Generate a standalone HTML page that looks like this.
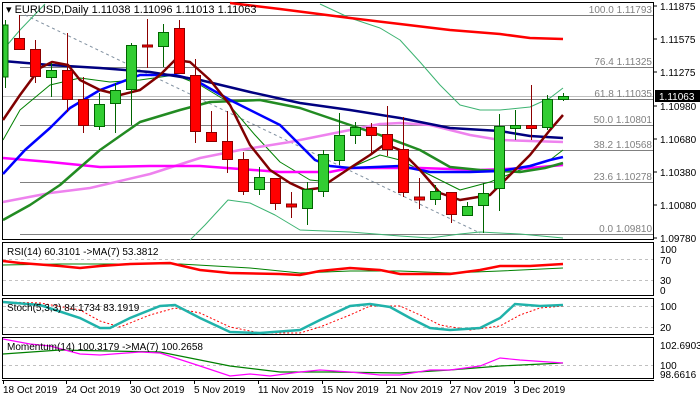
<!DOCTYPE html>
<html><head><meta charset="utf-8"><style>
html,body{margin:0;padding:0;background:#fff;}
svg{display:block;font-family:"Liberation Sans",sans-serif;}
</style></head><body>
<svg width="700" height="400" viewBox="0 0 700 400" xmlns="http://www.w3.org/2000/svg">
<rect width="700" height="400" fill="#fff"/>
<!-- panel borders -->
<g fill="none" stroke="#000" stroke-width="1">
<rect x="2.5" y="2.5" width="651" height="237"/>
<rect x="2.5" y="242.5" width="651" height="53"/>
<rect x="2.5" y="298.5" width="651" height="36"/>
<rect x="2.5" y="337.5" width="651" height="41"/>
</g>
<line x1="2" y1="380.5" x2="654" y2="380.5" stroke="#000"/>
<!-- fib lines -->
<g stroke="#808080" stroke-width="1">
<line x1="20" y1="15.5" x2="653" y2="15.5"/>
<line x1="20" y1="67.5" x2="653" y2="67.5"/>
<line x1="20" y1="99.5" x2="653" y2="99.5"/>
<line x1="20" y1="125.5" x2="653" y2="125.5"/>
<line x1="20" y1="150.5" x2="653" y2="150.5"/>
<line x1="20" y1="182.5" x2="653" y2="182.5"/>
<line x1="20" y1="234.5" x2="653" y2="234.5"/>
</g>
<line x1="3" y1="96.5" x2="653" y2="96.5" stroke="#c0c0c0"/>
<g font-size="10" fill="#808080" text-anchor="end">
<text x="652" y="13">100.0 1.11793</text>
<text x="652" y="65">76.4 1.11325</text>
<text x="652" y="97">61.8 1.11035</text>
<text x="652" y="123">50.0 1.10801</text>
<text x="652" y="148">38.2 1.10568</text>
<text x="652" y="180">23.6 1.10278</text>
<text x="652" y="232">0.0 1.09810</text>
</g>
<line x1="25" y1="15" x2="480" y2="233" stroke="#8090a0" stroke-dasharray="3,3"/>
<!-- MAs -->
<g fill="none" stroke-linejoin="round">
<polyline stroke="#3cb371" stroke-width="1" points="3,50 20,30 45,4"/>
<polyline stroke="#3cb371" stroke-width="1" points="320,4 350,18 380,28 400,40 420,62 440,85 460,105 480,110 500,110 530,107 550,98 563,88"/>
<polyline stroke="#3cb371" stroke-width="1" points="190,240 205,225 228,200 250,203 275,215 300,230 350,232 400,236 430,238 460,234 480,232 520,234 563,238"/>
<polyline stroke="#008000" stroke-width="1" points="3,140 20,110 50,85 80,78 110,82 140,80 175,75 200,85 225,100 255,135 280,162 310,180 330,182 350,168 380,155 400,160 430,175 460,190 490,182 520,170 550,160 563,150"/>
<polyline stroke="#ff0000" stroke-width="2.5" points="230,3 280,9 350,18 400,24 450,30 500,34 530,38 563,39"/>
<polyline stroke="#ee82ee" stroke-width="2.5" points="3,202 50,193 90,188 150,174 200,158 240,150 290,142 350,130 380,124 400,123 430,125 470,135 500,140 530,141 563,142"/>
<polyline stroke="#ff00ff" stroke-width="2.5" points="3,158 50,162 100,167 150,166 200,166 280,172 330,172 350,168 420,168 480,170 530,168 563,165"/>
<polyline stroke="#228b22" stroke-width="2.5" points="3,220 30,205 60,185 100,150 140,122 180,110 210,102 260,100 300,108 350,125 380,135 420,150 450,167 480,170 520,172 545,168 563,163"/>
<polyline stroke="#0000ff" stroke-width="2.5" points="3,174 25,150 50,128 70,108 100,90 140,75 175,75 195,80 230,100 280,125 300,145 315,160 330,166 350,168 400,166 430,172 470,172 500,171 530,166 550,160 563,157"/>
<polyline stroke="#000080" stroke-width="2.5" points="3,61 50,65 100,68 150,72 200,80 250,92 300,103 350,110 400,118 450,128 500,131 530,136 563,138"/>
<polyline stroke="#800000" stroke-width="2.5" points="3,120 20,95 40,68 52,62 68,65 80,80 100,90 120,95 140,90 160,75 175,60 190,62 210,80 230,105 250,145 270,170 290,183 305,190 320,188 335,178 350,168 370,155 385,144 400,150 420,170 440,193 460,200 490,195 510,175 530,155 550,130 563,115"/>
</g>
<!-- candles -->
<g stroke-width="1">
<g stroke="#006400" fill="#32cd32">
<line x1="5.5" y1="20" x2="5.5" y2="88"/><rect x="3" y="25" width="5" height="52"/>
<line x1="51.5" y1="63" x2="51.5" y2="97"/><rect x="46.5" y="70.5" width="10" height="7"/>
<line x1="99.5" y1="93" x2="99.5" y2="130"/><rect x="94.5" y="104.5" width="10" height="22"/>
<line x1="115.5" y1="83" x2="115.5" y2="133"/><rect x="110.5" y="90.5" width="10" height="13"/>
<line x1="131.5" y1="43" x2="131.5" y2="125"/><rect x="126.5" y="45.5" width="10" height="44"/>
<line x1="163.5" y1="24" x2="163.5" y2="67"/><rect x="158.5" y="32.5" width="10" height="14"/>
<line x1="259.5" y1="167" x2="259.5" y2="195"/><rect x="254.5" y="177.5" width="10" height="12"/>
<line x1="307.5" y1="182" x2="307.5" y2="225"/><rect x="302.5" y="189.5" width="10" height="19"/>
<line x1="323.5" y1="150" x2="323.5" y2="197"/><rect x="318.5" y="154.5" width="10" height="37"/>
<line x1="339.5" y1="113" x2="339.5" y2="165"/><rect x="334.5" y="135.5" width="10" height="25"/>
<line x1="355.5" y1="122" x2="355.5" y2="144"/><rect x="350.5" y="127.5" width="10" height="8"/>
<line x1="435.5" y1="185" x2="435.5" y2="205"/><rect x="430.5" y="191.5" width="10" height="8"/>
<line x1="467.5" y1="202" x2="467.5" y2="216"/><rect x="462.5" y="206.5" width="10" height="9"/>
<line x1="483.5" y1="183" x2="483.5" y2="233"/><rect x="478.5" y="193.5" width="10" height="12"/>
<line x1="499.5" y1="114" x2="499.5" y2="211"/><rect x="494.5" y="126.5" width="10" height="62"/>
<line x1="515.5" y1="110" x2="515.5" y2="140"/><rect x="510.5" y="125.5" width="10" height="3"/>
<line x1="547.5" y1="95" x2="547.5" y2="130"/><rect x="542.5" y="99.5" width="10" height="28"/>
<line x1="563.5" y1="93" x2="563.5" y2="101"/><rect x="558.5" y="96.5" width="10" height="3"/>
</g>
<g stroke="#8b0000" fill="#ff0000">
<line x1="19.5" y1="15" x2="19.5" y2="49"/><rect x="14.5" y="38.5" width="10" height="11"/>
<line x1="35.5" y1="40" x2="35.5" y2="83"/><rect x="30.5" y="49.5" width="10" height="27"/>
<line x1="67.5" y1="33" x2="67.5" y2="112"/><rect x="62.5" y="70.5" width="10" height="29"/>
<line x1="83.5" y1="77" x2="83.5" y2="133"/><rect x="78.5" y="99.5" width="10" height="26"/>
<line x1="147.5" y1="19" x2="147.5" y2="68"/><rect x="142.5" y="45" width="10" height="2"/>
<line x1="179.5" y1="20" x2="179.5" y2="73"/><rect x="174.5" y="28.5" width="10" height="45"/>
<line x1="195.5" y1="59" x2="195.5" y2="143"/><rect x="190.5" y="75.5" width="10" height="56"/>
<line x1="211.5" y1="111" x2="211.5" y2="142"/><rect x="206.5" y="132.5" width="10" height="9"/>
<line x1="227.5" y1="111" x2="227.5" y2="173"/><rect x="222.5" y="141.5" width="10" height="18"/>
<line x1="243.5" y1="152" x2="243.5" y2="195"/><rect x="238.5" y="159.5" width="10" height="32"/>
<line x1="275.5" y1="178" x2="275.5" y2="210"/><rect x="270.5" y="178.5" width="10" height="25"/>
<line x1="291.5" y1="192" x2="291.5" y2="218"/><rect x="286.5" y="204" width="10" height="3"/>
<line x1="371.5" y1="123" x2="371.5" y2="155"/><rect x="366.5" y="127.5" width="10" height="8"/>
<line x1="387.5" y1="106" x2="387.5" y2="156"/><rect x="382.5" y="134.5" width="10" height="15"/>
<line x1="403.5" y1="117" x2="403.5" y2="197"/><rect x="398.5" y="149.5" width="10" height="43"/>
<line x1="419.5" y1="178" x2="419.5" y2="209"/><rect x="414.5" y="197" width="10" height="3"/>
<line x1="451.5" y1="192" x2="451.5" y2="223"/><rect x="446.5" y="192.5" width="10" height="22"/>
<line x1="531.5" y1="85" x2="531.5" y2="140"/><rect x="526.5" y="125.5" width="10" height="3"/>
</g>
</g>
<text x="6" y="13" font-size="11" fill="#000">▾ EURUSD,Daily  1.11038 1.11096 1.11013 1.11063</text>
<!-- price axis -->
<g font-size="10" fill="#000">
<g stroke="#000"><line x1="654" y1="6" x2="657" y2="6"/><line x1="654" y1="39" x2="657" y2="39"/><line x1="654" y1="72" x2="657" y2="72"/><line x1="654" y1="106" x2="657" y2="106"/><line x1="654" y1="139" x2="657" y2="139"/><line x1="654" y1="172" x2="657" y2="172"/><line x1="654" y1="205" x2="657" y2="205"/><line x1="654" y1="238" x2="657" y2="238"/></g>
<text x="660" y="10">1.11875</text>
<text x="660" y="43">1.11575</text>
<text x="660" y="76">1.11275</text>
<text x="660" y="110">1.10980</text>
<text x="660" y="143">1.10680</text>
<text x="660" y="176">1.10380</text>
<text x="660" y="209">1.10080</text>
<text x="660" y="242">1.09780</text>
<rect x="655" y="90" width="45" height="12" fill="#000"/>
<text x="659" y="100" fill="#fff">1.11063</text>
</g>
<!-- RSI -->
<g stroke="#c0c0c0" stroke-dasharray="3,3"><line x1="3" y1="259.5" x2="653" y2="259.5"/><line x1="3" y1="280.5" x2="653" y2="280.5"/><line x1="3" y1="306.5" x2="653" y2="306.5"/><line x1="3" y1="327.5" x2="653" y2="327.5"/><line x1="3" y1="365.5" x2="653" y2="365.5"/></g>
<g fill="none">
<polyline stroke="#008000" stroke-width="1" points="3,265 60,264 180,264 250,268 300,273 350,271 400,271 450,273 500,271 563,268"/>
<polyline stroke="#ff0000" stroke-width="2.5" points="3,261 20,263 60,266 80,268 100,266 130,264 170,263 200,270 230,273 280,274 300,275 320,271 350,268 380,270 400,274 450,274 480,270 500,266 530,266 563,264"/>
<polyline stroke="#ff0000" stroke-width="1" stroke-dasharray="2,2" points="3,302 40,303 80,310 100,321 120,327 150,315 175,308 200,313 230,327 260,333 300,333 320,327 350,315 370,306 400,306 420,315 440,325 470,330 500,326 520,315 540,308 563,306"/>
<polyline stroke="#20b2aa" stroke-width="2.5" points="3,302 40,305 80,318 100,328 110,328 130,318 160,306 175,305 200,318 230,332 260,333 300,330 320,320 350,306 370,304 390,307 410,318 430,328 450,330 480,328 500,318 515,304 540,306 563,305"/>
<polyline stroke="#008000" stroke-width="1.2" points="3,354 60,350 160,352 230,366 280,372 330,372 400,373 450,370 500,366 563,363"/>
<polyline stroke="#ff00ff" stroke-width="1.2" points="3,339 30,344 50,346 80,354 100,355 140,352 160,353 200,366 230,376 250,374 270,376 300,372 320,370 350,372 380,375 400,375 430,370 450,370 480,366 500,358 520,360 563,363"/>
</g>
<g font-size="10" fill="#000">
<text x="7" y="255">RSI(14) 60.3101  -&gt;MA(7) 53.3812</text>
<text x="7" y="311">Stoch(5,3,3) 84.1734 83.1919</text>
<text x="7" y="350">Momentum(14) 100.3179  -&gt;MA(7) 100.2658</text>
<text x="660" y="253">100</text>
<text x="660" y="264">70</text>
<text x="660" y="284">30</text>
<text x="660" y="294">0</text>
<text x="660" y="310">100</text>
<text x="660" y="331">20</text>
<text x="660" y="349">102.6903</text>
<text x="660" y="369">100</text>
<text x="660" y="378">98.6616</text>
</g>
<!-- dates -->
<g stroke="#000"><line x1="3.5" y1="380" x2="3.5" y2="384"/><line x1="66.5" y1="380" x2="66.5" y2="384"/><line x1="130.5" y1="380" x2="130.5" y2="384"/><line x1="194.5" y1="380" x2="194.5" y2="384"/><line x1="258.5" y1="380" x2="258.5" y2="384"/><line x1="322.5" y1="380" x2="322.5" y2="384"/><line x1="386.5" y1="380" x2="386.5" y2="384"/><line x1="450.5" y1="380" x2="450.5" y2="384"/><line x1="514.5" y1="380" x2="514.5" y2="384"/></g>
<g font-size="10" fill="#000">
<text x="3" y="393">18 Oct 2019</text>
<text x="66" y="393">24 Oct 2019</text>
<text x="130" y="393">30 Oct 2019</text>
<text x="194" y="393">5 Nov 2019</text>
<text x="258" y="393">11 Nov 2019</text>
<text x="322" y="393">15 Nov 2019</text>
<text x="386" y="393">21 Nov 2019</text>
<text x="450" y="393">27 Nov 2019</text>
<text x="514" y="393">3 Dec 2019</text>
</g>
</svg>
</body></html>
